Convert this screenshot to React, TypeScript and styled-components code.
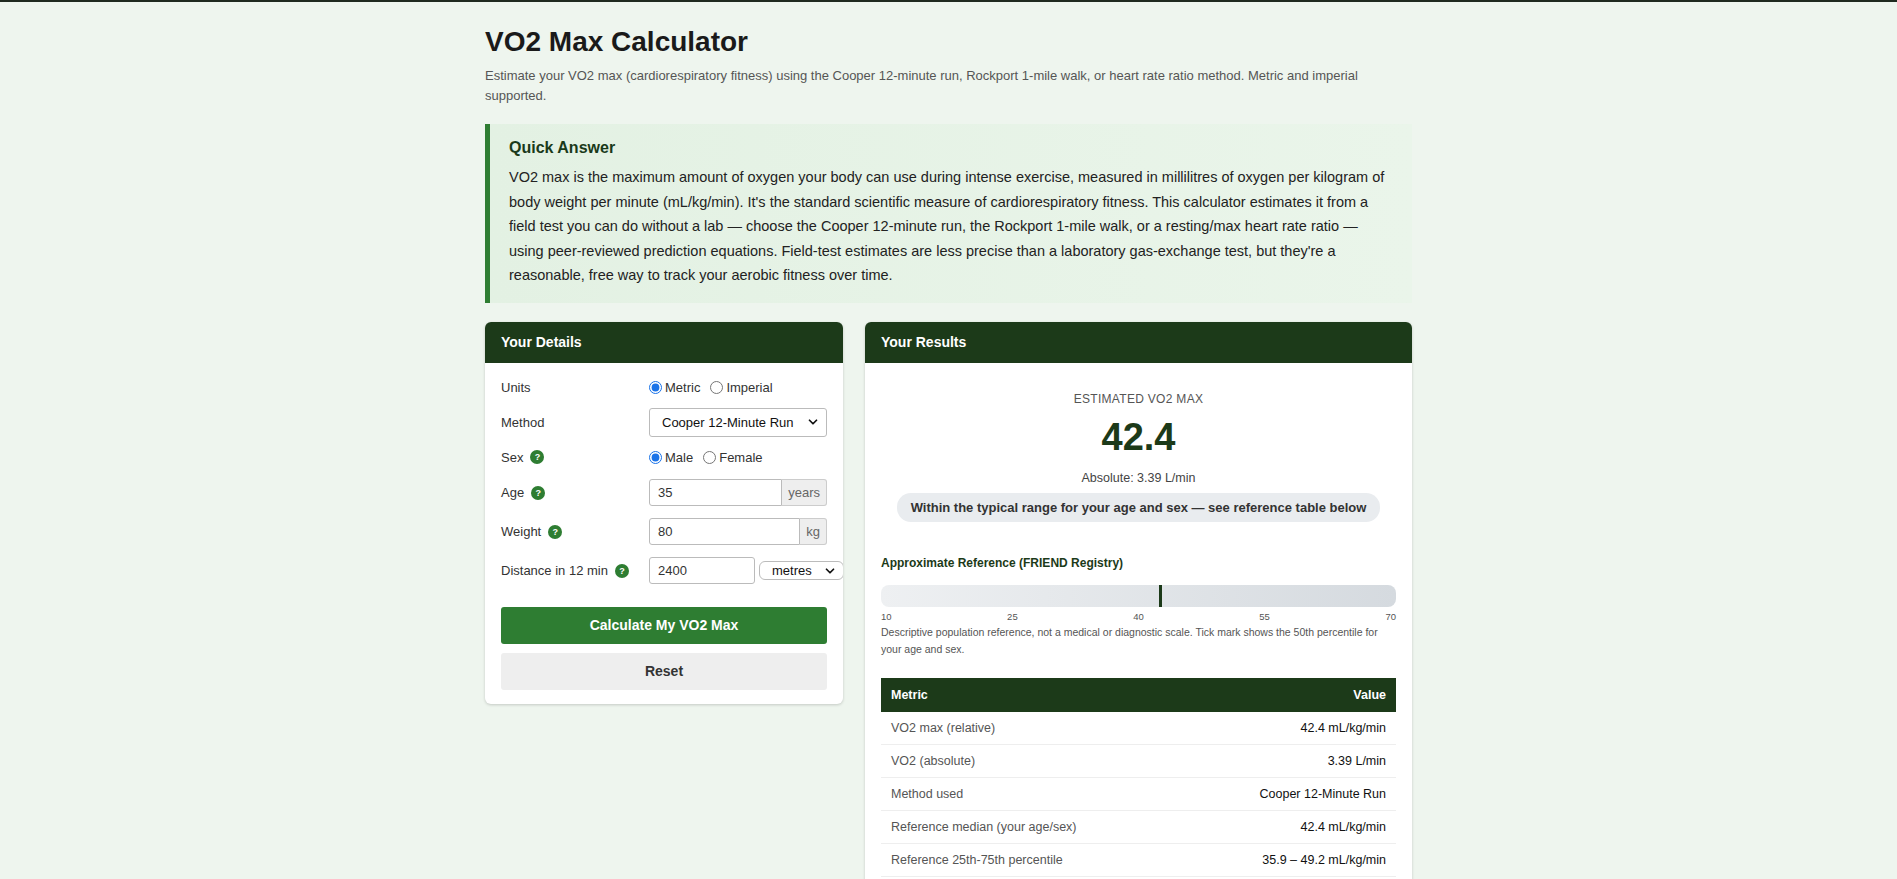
import { createGlobalStyle, styled } from "styled-components";

const Global = createGlobalStyle`
  html, body { margin: 0; padding: 0; }
  body {
    font-family: "Liberation Sans", Arial, sans-serif;
    background: #eef5ee;
    color: #1b1b1b;
    border-top: 2px solid #1f2a1f;
  }
`;

const Page = styled.div`
  width: 927px;
  margin: 0 auto;
  padding: 24px 0 40px;
`;

const Title = styled.h1`
  margin: 0;
  font-size: 28px;
  font-weight: 700;
  color: #1a1a1a;
`;

const Intro = styled.p`
  margin: 8px 0 0;
  padding-right: 40px;
  font-size: 13px;
  line-height: 20px;
  color: #555;
`;

const QuickAnswer = styled.div`
  margin-top: 18px;
  padding: 15px 18px 15px 19px;
  border-left: 5px solid #2e7d32;
  background: linear-gradient(90deg, #e3f1e3, #eaf5ea);
  h2 {
    margin: 0 0 8px;
    font-size: 16px;
    color: #1a3a1a;
  }
  p {
    margin: 0;
    font-size: 14.5px;
    line-height: 24.5px;
    color: #222;
  }
`;

const Columns = styled.div`
  display: grid;
  grid-template-columns: 358px 1fr;
  gap: 22px;
  margin-top: 19px;
  align-items: start;
`;

const Card = styled.div`
  background: #fff;
  border-radius: 6px;
  box-shadow: 0 1px 3px rgba(0, 0, 0, 0.18);
  overflow: hidden;
`;

const CardHead = styled.div`
  background: #1c3a19;
  color: #fff;
  font-weight: 700;
  font-size: 14px;
  height: 41px;
  display: flex;
  align-items: center;
  padding: 0 16px;
`;

const Form = styled.div`
  padding: 8px 16px 14px;
  display: flex;
  flex-direction: column;
`;

const Row = styled.div<{ h: number }>`
  display: grid;
  grid-template-columns: 148px 1fr;
  align-items: center;
  min-height: ${({ h }) => h}px;
  font-size: 13px;
  color: #333;
`;

const Label = styled.div`
  display: flex;
  align-items: center;
  gap: 7px;
`;

const Help = styled.span`
  width: 14px;
  height: 14px;
  border-radius: 50%;
  background: #2e7d32;
  color: #fff;
  font-size: 9px;
  font-weight: 700;
  display: inline-flex;
  align-items: center;
  justify-content: center;
`;

const Radios = styled.div`
  display: flex;
  gap: 10px;
  align-items: center;
  label { display: flex; align-items: center; gap: 3px; }
  input { margin: 0; width: 13px; height: 13px; accent-color: #1a73e8; }
`;

const Select = styled.div<{ w?: string; h: number; round?: number }>`
  width: ${({ w }) => w || "100%"};
  height: ${({ h }) => h}px;
  box-sizing: border-box;
  border: 1px solid #bbb;
  border-radius: ${({ round }) => round ?? 3}px;
  display: flex;
  align-items: center;
  justify-content: space-between;
  padding: 0 6px 0 12px;
  font-size: 13px;
  color: #111;
  align-self: center;
`;

const InputGroup = styled.div`
  display: flex;
  align-items: stretch;
  gap: ${({ gap }: { gap?: number }) => gap ?? 0}px;
  height: 27px;
`;

const Input = styled.div<{ w?: number }>`
  flex: ${({ w }) => (w ? `0 0 ${w}px` : "1")};
  border: 1px solid #bbb;
  border-radius: ${({ w }) => (w ? "3px" : "3px 0 0 3px")};
  display: flex;
  align-items: center;
  padding: 0 8px;
  font-size: 13px;
`;

const Unit = styled.div`
  background: #eee;
  border: 1px solid #ccc;
  border-left: none;
  border-radius: 0 3px 3px 0;
  padding: 0 6px;
  display: flex;
  align-items: center;
  color: #666;
  font-size: 13px;
`;

const Btn = styled.button<{ primary?: boolean }>`
  height: 37px;
  border: none;
  border-radius: 3px;
  font-family: inherit;
  font-weight: 700;
  font-size: 14px;
  background: ${({ primary }) => (primary ? "#2e7d32" : "#eeeeee")};
  color: ${({ primary }) => (primary ? "#fff" : "#333")};
  margin-top: ${({ primary }) => (primary ? "18px" : "9px")};
`;

const Results = styled.div`
  padding: 29px 16px 14px;
`;

const Summary = styled.div`
  text-align: center;
`;

const Kicker = styled.div`
  font-size: 12px;
  letter-spacing: 0.3px;
  color: #555;
`;

const Big = styled.div`
  font-size: 38px;
  font-weight: 700;
  color: #1c3a19;
  margin-top: 10px;
`;

const Abs = styled.div`
  font-size: 12.5px;
  color: #444;
  margin-top: 12px;
`;

const Pill = styled.div`
  display: inline-block;
  margin-top: 8px;
  padding: 7px 14px;
  border-radius: 14px;
  background: #e9ecef;
  color: #333;
  font-size: 13px;
  font-weight: 700;
`;

const RefTitle = styled.div`
  margin-top: 34px;
  font-size: 12px;
  font-weight: 700;
  color: #1c3a19;
`;

const Bar = styled.div`
  position: relative;
  margin-top: 15px;
  height: 22px;
  border-radius: 8px;
  background: linear-gradient(90deg, #eef0f2, #d5dadf);
`;

const Tick = styled.div`
  position: absolute;
  top: 0;
  bottom: 0;
  width: 3px;
  background: #1c3a19;
`;

const Scale = styled.div`
  display: flex;
  justify-content: space-between;
  font-size: 9.5px;
  color: #555;
  margin-top: 4px;
`;

const Note = styled.div`
  font-size: 10.5px;
  line-height: 17px;
  color: #555;
  margin-top: 2px;
`;

const Table = styled.table`
  width: 100%;
  border-collapse: collapse;
  margin-top: 20px;
  font-size: 12.5px;
  th {
    background: #1c3a19;
    color: #fff;
    height: 34px;
    padding: 0 10px;
    text-align: left;
    font-weight: 700;
  }
  th:last-child { text-align: right; }
  td {
    height: 32px;
    padding: 0 10px;
    border-bottom: 1px solid #eee;
    color: #555;
  }
  td:last-child { text-align: right; color: #111; }
`;

const Chevron = () => (
  <svg width="14" height="14" viewBox="0 0 24 24" fill="none" stroke="#111" strokeWidth="3" strokeLinecap="round" strokeLinejoin="round">
    <path d="M6 9l6 6 6-6" />
  </svg>
);

const rows: [string, string][] = [
  ["VO2 max (relative)", "42.4 mL/kg/min"],
  ["VO2 (absolute)", "3.39 L/min"],
  ["Method used", "Cooper 12-Minute Run"],
  ["Reference median (your age/sex)", "42.4 mL/kg/min"],
  ["Reference 25th-75th percentile", "35.9 – 49.2 mL/kg/min"],
];

export default function App() {
  return (
    <>
      <Global />
      <Page>
        <Title>VO2 Max Calculator</Title>
        <Intro>
          Estimate your VO2 max (cardiorespiratory fitness) using the Cooper 12-minute run, Rockport 1-mile walk, or heart rate ratio method. Metric and imperial supported.
        </Intro>
        <QuickAnswer>
          <h2>Quick Answer</h2>
          <p>
            VO2 max is the maximum amount of oxygen your body can use during intense exercise, measured in millilitres of oxygen per kilogram of body weight per minute (mL/kg/min). It's the standard scientific measure of cardiorespiratory fitness. This calculator estimates it from a field test you can do without a lab — choose the Cooper 12-minute run, the Rockport 1-mile walk, or a resting/max heart rate ratio — using peer-reviewed prediction equations. Field-test estimates are less precise than a laboratory gas-exchange test, but they're a reasonable, free way to track your aerobic fitness over time.
          </p>
        </QuickAnswer>
        <Columns>
          <Card>
            <CardHead>Your Details</CardHead>
            <Form>
              <Row h={34}>
                <Label>Units</Label>
                <Radios>
                  <label><input type="radio" name="u" defaultChecked /> Metric</label>
                  <label><input type="radio" name="u" /> Imperial</label>
                </Radios>
              </Row>
              <Row h={35}>
                <Label>Method</Label>
                <Select h={29}>Cooper 12-Minute Run <Chevron /></Select>
              </Row>
              <Row h={35}>
                <Label>Sex <Help>?</Help></Label>
                <Radios>
                  <label><input type="radio" name="s" defaultChecked /> Male</label>
                  <label><input type="radio" name="s" /> Female</label>
                </Radios>
              </Row>
              <Row h={36}>
                <Label>Age <Help>?</Help></Label>
                <InputGroup><Input>35</Input><Unit>years</Unit></InputGroup>
              </Row>
              <Row h={42}>
                <Label>Weight <Help>?</Help></Label>
                <InputGroup><Input>80</Input><Unit>kg</Unit></InputGroup>
              </Row>
              <Row h={36}>
                <Label>Distance in 12 min <Help>?</Help></Label>
                <InputGroup gap={4}>
                  <Input w={88}>2400</Input>
                  <Select w="85px" h={19} round={6}>metres <Chevron /></Select>
                </InputGroup>
              </Row>
              <Btn primary>Calculate My VO2 Max</Btn>
              <Btn>Reset</Btn>
            </Form>
          </Card>
          <Card>
            <CardHead>Your Results</CardHead>
            <Results>
              <Summary>
                <Kicker>ESTIMATED VO2 MAX</Kicker>
                <Big>42.4</Big>
                <Abs>Absolute: 3.39 L/min</Abs>
                <Pill>Within the typical range for your age and sex — see reference table below</Pill>
              </Summary>
              <RefTitle>Approximate Reference (FRIEND Registry)</RefTitle>
              <Bar>
                <Tick style={{ left: `${((42.4 - 10) / 60) * 100}%` }} />
              </Bar>
              <Scale>
                <span>10</span><span>25</span><span>40</span><span>55</span><span>70</span>
              </Scale>
              <Note>
                Descriptive population reference, not a medical or diagnostic scale. Tick mark shows the 50th percentile for your age and sex.
              </Note>
              <Table>
                <thead>
                  <tr><th>Metric</th><th>Value</th></tr>
                </thead>
                <tbody>
                  {rows.map(([k, v]) => (
                    <tr key={k}><td>{k}</td><td>{v}</td></tr>
                  ))}
                </tbody>
              </Table>
            </Results>
          </Card>
        </Columns>
      </Page>
    </>
  );
}
